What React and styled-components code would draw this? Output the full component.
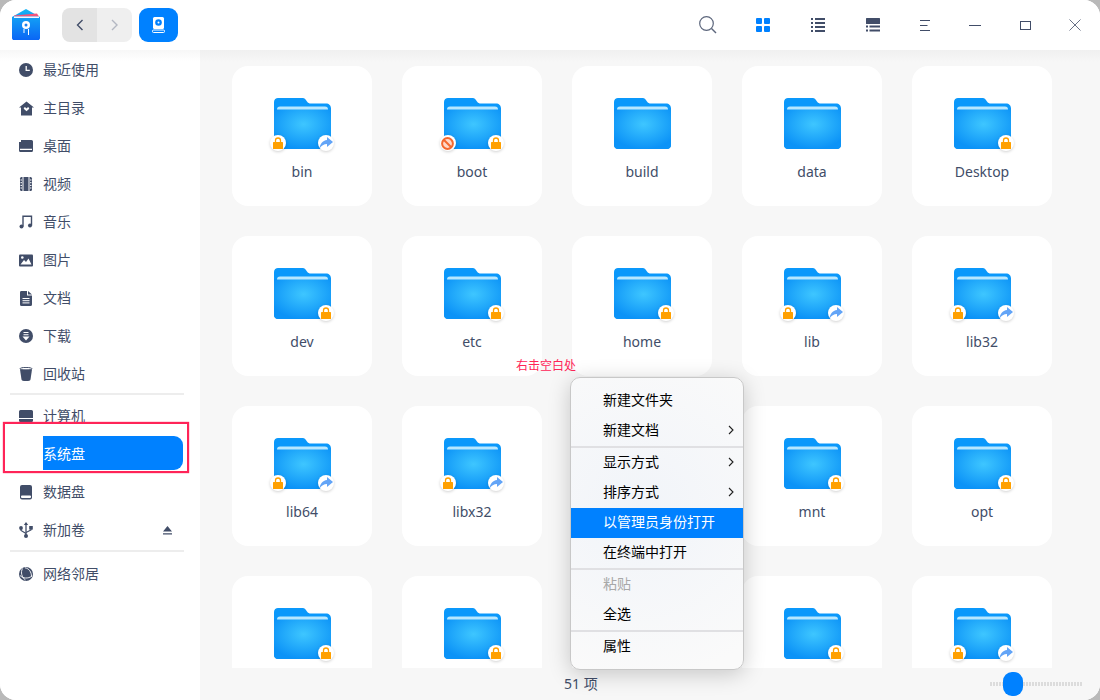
import React from 'react';
import styled, { createGlobalStyle } from 'styled-components';

const GlobalStyle = createGlobalStyle`
    html, body {
        margin: 0;
        padding: 0;
        background: #b9b9b9;
    }
    * {
        box-sizing: border-box;
    }
`;

const INK = '#414d68';
const BLUE = '#0081ff';

// cards hidden under the menu or cut off by the status bar have no readable label
const FOLDERS = [
    { name: 'bin', left: 'lock', right: 'share' },
    { name: 'boot', left: 'ban', right: 'lock' },
    { name: 'build' },
    { name: 'data' },
    { name: 'Desktop', right: 'lock' },
    { name: 'dev', right: 'lock' },
    { name: 'etc', right: 'lock' },
    { name: 'home', right: 'lock' },
    { name: 'lib', left: 'lock', right: 'share' },
    { name: 'lib32', left: 'lock', right: 'share' },
    { name: 'lib64', left: 'lock', right: 'share' },
    { name: 'libx32', left: 'lock', right: 'share' },
    { right: 'lock' },
    { name: 'mnt', right: 'lock' },
    { name: 'opt', right: 'lock' },
    { right: 'lock' },
    { right: 'lock' },
    { right: 'lock' },
    { right: 'lock' },
    { left: 'lock', right: 'share' },
];

// sidebar icons
const ClockIcon = () => (
    <svg width="14" height="14" viewBox="0 0 14 14">
        <circle cx="7" cy="7" r="7" fill={INK} />
        <path d="M7.2 3v4.3h3.6" fill="none" stroke="#fff" strokeWidth="1.3" />
    </svg>
);
const HomeIcon = () => (
    <svg width="15" height="15" viewBox="0 0 15 15">
        <path d="M7.5 0.5 15 6.6h-2V14.5H2V6.6H0z" fill={INK} />
        <path d="M7.5 10.3 5 7.9c-.8-1 .7-2.2 1.5-1.3l1 .9 1-.9c.8-.9 2.3.3 1.500 1.300z" fill="#fff" />
    </svg>
);
const DesktopIcon = () => (
    <svg width="14" height="14" viewBox="0 0 14 14">
        <path d="M2 1h10.5A1.5 1.5 0 0 1 14 2.500v9a1.500 1.500 0 0 1-1.500 1.500h-11A1.500 1.500 0 0 1 0 11.500v-9L2 1z" fill={INK} />
        <path d="M1 10.300h12" stroke="#fff" strokeWidth="1.200" />
        <path d="M0 1h2v2H0z" fill="#fff" />
    </svg>
);
const VideoIcon = () => (
    <svg width="14" height="14" viewBox="0 0 14 14">
        <rect x="1" y="0" width="12" height="14" rx="1.500" fill={INK} />
        <path d="M4 0v14M10 0v14" stroke="#fff" strokeWidth="1" />
        <path d="M1.500 3h1.500M1.500 5.700h1.500M1.500 8.400h1.500M1.500 11h1.500M11 3h1.500M11 5.700h1.500M11 8.400h1.500M11 11h1.500" stroke="#fff" strokeWidth="1" />
    </svg>
);
const MusicIcon = () => (
    <svg width="14" height="14" viewBox="0 0 14 14">
        <path d="M4 11.500V1.200h8.500v9.300" fill="none" stroke={INK} strokeWidth="1.400" />
        <circle cx="2.500" cy="11.500" r="2" fill={INK} />
        <circle cx="11" cy="10.500" r="2" fill={INK} />
    </svg>
);
const PictureIcon = () => (
    <svg width="14" height="13" viewBox="0 0 14 13">
        <rect width="14" height="12" y="0.500" rx="1" fill={INK} />
        <circle cx="3.300" cy="3.500" r="1.300" fill="#fff" />
        <path d="M1.500 10.500 5 6l2 2 2.500-3.500 3 6z" fill="#fff" />
    </svg>
);
const DocIcon = () => (
    <svg width="14" height="15" viewBox="0 0 14 15">
        <path d="M2 0h6v4.500h5V13.500A1.500 1.500 0 0 1 11.500 15h-9A1.500 1.500 0 0 1 1 13.500v-12A1.500 1.500 0 0 1 2 0zM9 0l4 3.500H9z" fill={INK} />
        <path d="M3.500 7.500h7M3.500 9.700h7M3.500 11.900h7" stroke="#fff" strokeWidth="1" />
    </svg>
);
const DownloadIcon = () => (
    <svg width="14" height="14" viewBox="0 0 14 14">
        <circle cx="7" cy="7" r="7" fill={INK} />
        <path d="M4.500 3.500h5M4.500 5.700h5" stroke="#fff" strokeWidth="1.100" />
        <path d="M3.500 7.600h7L7 11.500z" fill="#fff" />
    </svg>
);
const TrashIcon = () => (
    <svg width="14" height="14" viewBox="0 0 14 14">
        <path d="M1 2.500 2.500 12.500C2.700 13.500 4 14 7 14s4.300-.5 4.500-1.500L13 2.500z" fill={INK} />
        <ellipse cx="7" cy="1.800" rx="6" ry="1.400" fill="none" stroke={INK} strokeWidth="1" />
    </svg>
);
const ComputerIcon = () => (
    <svg width="14" height="12" viewBox="0 0 14 12">
        <path d="M1.500 0h11A1.500 1.500 0 0 1 14 1.500V8H0V1.500A1.500 1.500 0 0 1 1.500 0z" fill={INK} />
        <path d="M0 9h14v1.300A1.500 1.500 0 0 1 12.500 12h-11A1.500 1.500 0 0 1 0 10.300z" fill={INK} />
    </svg>
);
const DiskIcon = () => (
    <svg width="12" height="15" viewBox="0 0 12 15">
        <rect width="12" height="14.500" rx="2" fill={INK} />
        <rect x="1" y="10.500" width="10" height="2.500" rx="1" fill="#fff" />
    </svg>
);
const UsbIcon = () => (
    <svg width="14" height="16" viewBox="0 0 14 16">
        <path d="M7 0 9.200 3H4.800z" fill={INK} />
        <path d="M7 2.500V13.500" stroke={INK} strokeWidth="1.300" />
        <circle cx="7" cy="14" r="2" fill={INK} />
        <circle cx="2" cy="6" r="1.900" fill={INK} />
        <path d="M2 7v1.500L7 11.500" fill="none" stroke={INK} strokeWidth="1.200" />
        <rect x="10.200" y="4" width="3.600" height="3.600" fill={INK} />
        <path d="M12 7v1L7 10.500" fill="none" stroke={INK} strokeWidth="1.200" />
    </svg>
);
const NetworkIcon = () => (
    <svg width="14" height="14" viewBox="0 0 14 14">
        <circle cx="7" cy="7" r="7" fill={INK} />
        <path d="M3.500 1.500C1.500 5 2.500 10.500 6.500 13M1 8.500C4 11.500 9 12 13 9M6 .8C10 1.500 12.500 5 12.500 9.500" fill="none" stroke="#fff" strokeWidth="0.900" />
    </svg>
);

// folder badges
const LockGlyph = () => (
    <svg width="10" height="12" viewBox="0 0 10 12">
        <path d="M2.500 5.500V3.500a2.500 2.500 0 0 1 5 0v2" fill="none" stroke="#ffa000" strokeWidth="1.300" />
        <rect y="5" width="10" height="7" rx="0.600" fill="#ffa000" />
    </svg>
);
const ShareGlyph = () => (
    <svg width="14" height="12" viewBox="0 0 14 12">
        <path d="M8 0 14 5 8 10V7C4.800 7 2.500 8.500 0.500 11.500 1 7 3.500 3.500 8 3z" fill="#62a4f7" />
    </svg>
);
const BanGlyph = () => (
    <svg width="13" height="13" viewBox="0 0 13 13">
        <circle cx="6.500" cy="6.500" r="5.400" fill="#ffd8c8" stroke="#f4682f" strokeWidth="2" />
        <path d="M3 3 10 10" stroke="#f4682f" strokeWidth="2" />
    </svg>
);

const BADGES = { lock: LockGlyph, share: ShareGlyph, ban: BanGlyph };

const SIDEBAR_TOP = [
    { label: '最近使用', Icon: ClockIcon },
    { label: '主目录', Icon: HomeIcon },
    { label: '桌面', Icon: DesktopIcon },
    { label: '视频', Icon: VideoIcon },
    { label: '音乐', Icon: MusicIcon },
    { label: '图片', Icon: PictureIcon },
    { label: '文档', Icon: DocIcon },
    { label: '下载', Icon: DownloadIcon },
    { label: '回收站', Icon: TrashIcon },
];

function Folder({ id, left, right }) {
    const LeftBadge = BADGES[left];
    const RightBadge = BADGES[right];
    return (
        <FolderWrap>
            <svg width="57" height="51" viewBox="0 0 57 51">
                <defs>
                    <radialGradient id={id} cx="0.52" cy="0.38" r="0.62">
                        <stop offset="0" stopColor="#3ec6ff" />
                        <stop offset="1" stopColor="#0c93f7" />
                    </radialGradient>
                </defs>
                <path d="M4 0H28C31 0 31.500 1.500 33 3.500 34 5 35 5.500 37 5.500H52C55 5.500 57 7.500 57 10.500V47C57 49.500 55 51 53 51H4C2 51 0 49.500 0 47V4C0 1.500 2 0 4 0Z" fill="#0a98fb" />
                <path d="M0 11H57V47C57 49.500 55 51 53 51H4C2 51 0 49.500 0 47Z" fill={`url(#${id})`} />
                <path d="M3 11.500C3 9.500 4 8.500 6 8.500H51C53 8.500 54 9.500 54 11.500Z" fill="#b7e7ff" />
            </svg>
            {LeftBadge && <Badge $side="left"><LeftBadge /></Badge>}
            {RightBadge && <Badge $side="right"><RightBadge /></Badge>}
        </FolderWrap>
    );
}

function Chevron() {
    return (
        <ChevronSvg width="6" height="10" viewBox="0 0 6 10">
            <path d="M1 1 5 5 1 9" fill="none" stroke="#222" strokeWidth="1.100" />
        </ChevronSvg>
    );
}

function App() {
    return (
        <Window>
            <GlobalStyle />
            <TitleBar>
                <svg width="28" height="32" viewBox="0 0 28 32">
                    <defs>
                        <linearGradient id="logoFill" x1="0" y1="0" x2="0" y2="1">
                            <stop offset="0" stopColor="#16b4f5" />
                            <stop offset="1" stopColor="#0a66f5" />
                        </linearGradient>
                    </defs>
                    <path d="M0 8 14 0 28 8V29C28 30.500 27 31 26 31H2C1 31 0 30.500 0 29Z" fill="url(#logoFill)" />
                    <path d="M2 6.500 25 4.500 27 7.500H2Z" fill="#f2557a" />
                    <path d="M2 7.500H27V9H2Z" fill="#f3f6ff" />
                    <circle cx="14" cy="16" r="4" fill="#fff" />
                    <circle cx="14" cy="16" r="1.500" fill="#1a80f0" />
                    <path d="M12 20v4M16.500 20v6" stroke="#fff" strokeWidth="1" />
                </svg>
                <NavGroup>
                    <NavSegment $pressed>
                        <svg width="8" height="12" viewBox="0 0 8 12">
                            <path d="M6.500 1 1.500 6 6.500 11" fill="none" stroke={INK} strokeWidth="1.400" />
                        </svg>
                    </NavSegment>
                    <NavSegment>
                        <svg width="8" height="12" viewBox="0 0 8 12">
                            <path d="M1 1 6 6 1 11" fill="none" stroke="#b3b7c2" strokeWidth="1.400" />
                        </svg>
                    </NavSegment>
                </NavGroup>
                <CrumbButton>
                    <svg width="13" height="16" viewBox="0 0 13 16">
                        <rect x="1" y="0" width="11" height="12" rx="1.500" fill="#fff" />
                        <circle cx="6.500" cy="5.500" r="3.300" fill={BLUE} />
                        <circle cx="6.500" cy="5.500" r="1" fill="#fff" />
                        <rect x="0.500" y="13" width="12" height="2.500" rx="1" fill="none" stroke="#fff" strokeWidth="1" />
                    </svg>
                </CrumbButton>
                <ToolGroup>
                    <ToolSlot $wide>
                        <svg width="18" height="18" viewBox="0 0 18 18">
                            <circle cx="7.500" cy="7.500" r="6.800" fill="none" stroke="#5c667c" strokeWidth="1.200" />
                            <path d="M12.500 12.500 17 17" stroke="#5c667c" strokeWidth="1.400" />
                        </svg>
                    </ToolSlot>
                    <ToolSlot $wide>
                        <svg width="14" height="14" viewBox="0 0 14 14">
                            <rect width="6" height="6" rx="1" fill={BLUE} />
                            <rect x="8" width="6" height="6" rx="1" fill={BLUE} />
                            <rect y="8" width="6" height="6" rx="1" fill={BLUE} />
                            <rect x="8" y="8" width="6" height="6" rx="1" fill={BLUE} />
                        </svg>
                    </ToolSlot>
                    <ToolSlot $wide>
                        <svg width="14" height="14" viewBox="0 0 14 14">
                            <path d="M0 1h2M4 1h10M0 5h2M4 5h10M0 9h2M4 9h10M0 13h2M4 13h10" stroke={INK} strokeWidth="2" />
                        </svg>
                    </ToolSlot>
                    <ToolSlot $wide>
                        <svg width="14" height="14" viewBox="0 0 14 14">
                            <rect width="14" height="6" rx="0.500" fill={INK} />
                            <path d="M0 8.500h2M3.500 8.500h10.500M0 12.500h2M3.500 12.500h10.500" stroke={INK} strokeWidth="1.800" />
                        </svg>
                    </ToolSlot>
                    <ToolSlot>
                        <svg width="10" height="11" viewBox="0 0 10 11">
                            <path d="M0 .5h10M0 5.500h7.500M0 10.500h10" stroke={INK} strokeWidth="1" />
                        </svg>
                    </ToolSlot>
                    <ToolSlot>
                        <svg width="12" height="1" viewBox="0 0 12 1">
                            <path d="M0 .5h12" stroke={INK} strokeWidth="1" />
                        </svg>
                    </ToolSlot>
                    <ToolSlot>
                        <svg width="11" height="9" viewBox="0 0 11 9">
                            <rect x="0.500" y="0.500" width="10" height="8" fill="none" stroke={INK} strokeWidth="1" />
                        </svg>
                    </ToolSlot>
                    <ToolSlot>
                        <svg width="12" height="12" viewBox="0 0 12 12">
                            <path d="M0.500 0.500 11.500 11.500M11.500 0.500 0.500 11.500" stroke={INK} strokeWidth="0.800" />
                        </svg>
                    </ToolSlot>
                </ToolGroup>
            </TitleBar>

            <Body>
                <Sidebar>
                    {SIDEBAR_TOP.map(({ label, Icon }) => (
                        <NavItem key={label}>
                            <IconSlot><Icon /></IconSlot>
                            {label}
                        </NavItem>
                    ))}
                    <Divider />
                    <NavItem>
                        <IconSlot><ComputerIcon /></IconSlot>
                        计算机
                    </NavItem>
                    <SelectedItem>
                        <SelectedPill>系统盘</SelectedPill>
                    </SelectedItem>
                    <NavItem>
                        <IconSlot><DiskIcon /></IconSlot>
                        数据盘
                    </NavItem>
                    <NavItem>
                        <IconSlot><UsbIcon /></IconSlot>
                        新加卷
                        <EjectIcon width="9" height="9" viewBox="0 0 9 9">
                            <path d="M4.500 0 9 5.500H0zM0 7.300h9V8.500H0z" fill={INK} />
                        </EjectIcon>
                    </NavItem>
                    <Divider $lower />
                    <NavItem>
                        <IconSlot><NetworkIcon /></IconSlot>
                        网络邻居
                    </NavItem>
                </Sidebar>

                <Content>
                    <ScrollArea>
                        <Grid>
                            {FOLDERS.map((f, i) => (
                                <Card key={i}>
                                    <Folder id={`fill-${i}`} left={f.left} right={f.right} />
                                    {f.name && <CardLabel>{f.name}</CardLabel>}
                                </Card>
                            ))}
                        </Grid>
                    </ScrollArea>
                    <StatusBar>
                        <ItemCount>51 项</ItemCount>
                        <SizeSlider>
                            <SliderThumb />
                        </SizeSlider>
                    </StatusBar>
                </Content>
            </Body>

            <MenuHint>右击空白处</MenuHint>
            <Menu>
                <MenuItem>新建文件夹</MenuItem>
                <MenuItem>新建文档<Chevron /></MenuItem>
                <MenuDivider />
                <MenuItem>显示方式<Chevron /></MenuItem>
                <MenuItem>排序方式<Chevron /></MenuItem>
                <MenuItem $active>以管理员身份打开</MenuItem>
                <MenuItem>在终端中打开</MenuItem>
                <MenuDivider />
                <MenuItem $disabled>粘贴</MenuItem>
                <MenuItem>全选</MenuItem>
                <MenuDivider />
                <MenuItem>属性</MenuItem>
            </Menu>
        </Window>
    );
}

export default App;

const Window = styled.div`
    position: relative;
    width: 1100px;
    height: 700px;
    border-radius: 16px;
    overflow: hidden;
    display: flex;
    flex-direction: column;
    background: #fff;
    font-family: "Noto Sans", "Noto Sans CJK SC", sans-serif;
    font-size: 14px;
    color: ${INK};
`;

const TitleBar = styled.div`
    height: 50px;
    flex-shrink: 0;
    display: flex;
    align-items: center;
    padding-left: 12px;
    background: #fff;
`;

const NavGroup = styled.div`
    display: flex;
    margin-left: 22px;
    height: 34px;
    border-radius: 8px;
    overflow: hidden;
`;

const NavSegment = styled.div`
    width: 35px;
    display: flex;
    align-items: center;
    justify-content: center;
    background: ${(p) => (p.$pressed ? '#e3e3e3' : '#efefef')};
`;

const CrumbButton = styled.div`
    width: 39px;
    height: 34px;
    margin-left: 7px;
    border-radius: 9px;
    background: ${BLUE};
    display: flex;
    align-items: center;
    justify-content: center;
`;

const ToolGroup = styled.div`
    margin-left: auto;
    display: flex;
    align-items: center;
`;

const ToolSlot = styled.div`
    width: ${(p) => (p.$wide ? '55px' : '50px')};
    height: 50px;
    display: flex;
    align-items: center;
    justify-content: center;
`;

const Body = styled.div`
    flex: 1;
    min-height: 0;
    display: flex;
`;

const Sidebar = styled.div`
    width: 200px;
    flex-shrink: 0;
    padding-top: 1px;
    background: linear-gradient(#f7f7f7, #fff 11px);
`;

const NavItem = styled.div`
    height: 38px;
    display: flex;
    align-items: center;
    padding-right: 28px;
    line-height: 20px;
    white-space: nowrap;
`;

const IconSlot = styled.span`
    width: 16px;
    margin-left: 18px;
    margin-right: 9px;
    display: flex;
    align-items: center;
    justify-content: center;
`;

const EjectIcon = styled.svg`
    margin-left: auto;
`;

const Divider = styled.div`
    height: 2px;
    margin: ${(p) => (p.$lower ? '1px 16px 3px 10px' : '0 16px 2px 10px')};
    background: #ededed;
`;

const SelectedItem = styled.div`
    position: relative;
    z-index: 1;
    isolation: isolate;
    height: 38px;
    display: flex;
    align-items: center;
    padding-left: 43px;

    /* red annotation frame drawn on the screenshot */
    &::before {
        content: "";
        box-sizing: border-box;
        position: absolute;
        z-index: -1;
        left: 3px;
        top: -13px;
        width: 186px;
        height: 51px;
        background: #fff;
        border: 2px solid #ff2458;
        box-shadow: 0 0 1px #ff2458;
    }
`;

const SelectedPill = styled.div`
    width: 140px;
    height: 34px;
    margin-bottom: 2px;
    line-height: 36px;
    color: #fff;
    background: ${BLUE};
    border-radius: 0 9px 9px 0;
`;

const Content = styled.div`
    flex: 1;
    min-width: 0;
    display: flex;
    flex-direction: column;
    background: linear-gradient(#f0f0f0, #f7f7f7 12px);
`;

const ScrollArea = styled.div`
    flex: 1;
    min-height: 0;
    overflow: hidden;
    padding: 16px 0 0 32px;
`;

const Grid = styled.div`
    display: grid;
    grid-template-columns: repeat(5, 140px);
    grid-auto-rows: 140px;
    gap: 30px;
`;

const Card = styled.div`
    background: #fff;
    border-radius: 16px;
    padding-top: 32px;
    display: flex;
    flex-direction: column;
    align-items: center;
`;

const FolderWrap = styled.div`
    position: relative;
    width: 57px;
    height: 51px;

    svg {
        display: block;
    }
`;

const Badge = styled.span`
    position: absolute;
    top: 37px;
    left: ${(p) => (p.$side === 'left' ? '-4px' : '44px')};
    width: 16px;
    height: 16px;
    border-radius: 50%;
    background: #fff;
    box-shadow: 0 1px 3px rgba(0, 0, 0, 0.18);
    display: flex;
    align-items: center;
    justify-content: center;
`;

const CardLabel = styled.div`
    margin-top: 13px;
    line-height: 20px;
`;

const StatusBar = styled.div`
    height: 32px;
    flex-shrink: 0;
    display: flex;
    align-items: center;
    padding-left: 364px;
    padding-right: 18px;
`;

const ItemCount = styled.span`
    line-height: 20px;
`;

const SizeSlider = styled.div`
    position: relative;
    margin-left: auto;
    width: 92px;
    height: 4px;
    background: repeating-linear-gradient(90deg, #dcdcdc 0 2px, transparent 2px 3px);
`;

const SliderThumb = styled.div`
    position: absolute;
    left: 13px;
    top: -10px;
    width: 20px;
    height: 24px;
    border-radius: 9px;
    background: ${BLUE};
`;

const MenuHint = styled.div`
    position: absolute;
    left: 516px;
    top: 358px;
    font-size: 12px;
    line-height: 16px;
    color: #ff2458;
`;

const Menu = styled.div`
    position: absolute;
    left: 570px;
    top: 377px;
    width: 174px;
    padding: 8px 0 7px;
    border: 1px solid #c8c8c8;
    border-radius: 10px;
    background: radial-gradient(circle at 40% 45%, #f1f4f9, #fafafa 90%);
    box-shadow: 0 4px 22px rgba(0, 0, 0, 0.2);
    overflow: hidden;
`;

const MenuItem = styled.div`
    height: 30px;
    display: flex;
    align-items: center;
    justify-content: space-between;
    padding: 0 9px 2px 32px;
    line-height: 20px;
    color: ${(p) => (p.$active ? '#fff' : p.$disabled ? '#a8a8a8' : '#000')};
    background: ${(p) => (p.$active ? BLUE : 'transparent')};
`;

const MenuDivider = styled.div`
    height: 2px;
    background: #e0e0e3;
`;

const ChevronSvg = styled.svg`
    flex-shrink: 0;
`;
